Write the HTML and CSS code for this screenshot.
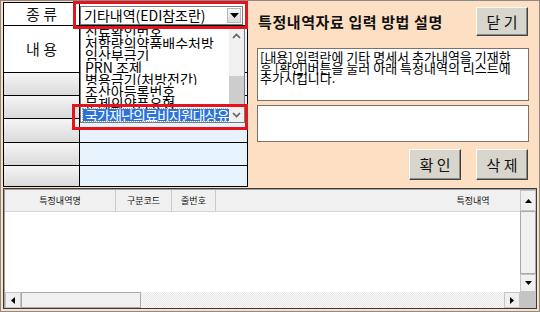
FILE: index.html
```html
<!DOCTYPE html>
<html>
<head>
    <meta charset="utf-8">
    <title>특정내역 입력</title>
    <link rel="stylesheet" href="styles.css">
</head>
<body>
<div class="window">
    <div class="top">
        <div class="form">
            <div class="label plain">종 류</div>
            <div class="value plain">
                <div class="combo">
                    <span class="combo-text">기타내역(EDI참조란)</span>
                    <span class="combo-btn">
                        <svg width="9" height="5" viewBox="0 0 9 5"><polygon points="0,0 9,0 4.5,5" fill="#000"/></svg>
                    </span>
                </div>
            </div>
            <div class="label plain">내 용</div>
            <div class="value"></div>
            <div class="label"></div>
            <div class="value"></div>
            <div class="label"></div>
            <div class="value"></div>
            <div class="label"></div>
            <div class="value"></div>
            <div class="label"></div>
            <div class="value"></div>
            <div class="label"></div>
            <div class="value"></div>
        </div>
        <div class="help">
            <div class="help-head">
                <h2 class="help-title">특정내역자료 입력 방법 설명</h2>
                <button class="btn">닫 기</button>
            </div>
            <div class="memo">[내용] 입력란에 기타 명세서 추가내역을 기재한<br>후 [확인]버튼을 눌러 아래 특정내역의 리스트에<br>추가시킵니다.</div>
            <div class="memo memo-input"></div>
            <div class="actions">
                <button class="btn">확 인</button>
                <button class="btn">삭 제</button>
            </div>
        </div>
    </div>

    <div class="grid">
        <div class="grid-view">
            <div class="grid-head">
                <div class="col col-name">특정내역명</div>
                <div class="col col-code">구분코드</div>
                <div class="col col-line">줄번호</div>
                <div class="col col-text">특정내역</div>
            </div>
            <div class="grid-body"></div>
        </div>
        <div class="vscroll">
            <div class="sb-btn sb-up">
                <svg width="7" height="4" viewBox="0 0 7 4"><polygon points="0,4 7,4 3.5,0" fill="#000"/></svg>
            </div>
            <div class="sb-thumb"></div>
            <div class="sb-btn sb-down">
                <svg width="7" height="4" viewBox="0 0 7 4"><polygon points="0,0 7,0 3.5,4" fill="#000"/></svg>
            </div>
        </div>
        <div class="hscroll">
            <div class="sb-btn sb-side">
                <svg width="4" height="7" viewBox="0 0 4 7"><polygon points="4,0 4,7 0,3.5" fill="#000"/></svg>
            </div>
            <div class="sb-thumb sb-hthumb"></div>
            <div class="sb-track"></div>
            <div class="sb-btn sb-side">
                <svg width="4" height="7" viewBox="0 0 4 7"><polygon points="0,0 0,7 4,3.5" fill="#000"/></svg>
            </div>
        </div>
        <div class="corner"></div>
    </div>

    <!-- opened combo list lies over the form -->
    <div class="droplist">
        <div class="drop-items">
            <div class="drop-item">진료확인번호</div>
            <div class="drop-item">저함량의약품배수처방</div>
            <div class="drop-item">임산부금기</div>
            <div class="drop-item">PRN 조제</div>
            <div class="drop-item">병용금기(처방전간)</div>
            <div class="drop-item">조산아등록번호</div>
            <div class="drop-item">문제의약품유형</div>
            <div class="drop-item selected">국가재난의료비지원대상유</div>
        </div>
        <div class="drop-scroll">
            <svg width="9" height="6" viewBox="0 0 9 6"><polyline points="1,5 4.5,1.5 8,5" fill="none" stroke="#606060" stroke-width="1.6"/></svg>
            <div class="drop-thumb"></div>
            <svg width="9" height="6" viewBox="0 0 9 6"><polyline points="1,1 4.5,4.5 8,1" fill="none" stroke="#606060" stroke-width="1.6"/></svg>
        </div>
    </div>

    <div class="mark mark-combo"></div>
    <div class="mark mark-item"></div>
</div>
</body>
</html>
```

FILE: styles.css
```css
body {
    margin: 0;
    font-family: "Noto Sans CJK KR", "Noto Sans", sans-serif;
    background-color: #fde0c4;
}
.window {
    position: relative;
    width: 540px;
    height: 312px;
    box-sizing: border-box;
    border: 1px solid #8a8a8a;
    background-color: #fde0c4;
    overflow: hidden;
}
.top {
    display: flex;
    height: 187px;
}

/* left form table */
.form {
    margin: 1px 0 0 2px;
    width: 245px;
    height: 185px;
    box-sizing: border-box;
    display: grid;
    grid-template-columns: 75px 167px;
    grid-template-rows: 22px 46px 22px 22px 23px 22px 20px;
    gap: 1px;
    border: 1px solid #000;
    background-color: #000;
}
.label {
    background: linear-gradient(#f5f5f5, #dadada);
    font-size: 15px;
    line-height: 22px;
    text-align: center;
    color: #111;
}
.label.plain {
    background: #fff;
    display: flex;
    align-items: center;
    justify-content: center;
}
.value {
    background-color: #e6f2fc;
}
.value.plain {
    background-color: #fff;
}
.combo {
    display: flex;
    align-items: center;
    margin-top: 3px;
    width: 163px;
    height: 19px;
    box-sizing: border-box;
    border: 1px solid #7a7a7a;
    background: #fff;
}
.combo-text {
    flex: 1;
    padding-left: 3px;
    font-size: 14px;
    line-height: 17px;
    white-space: nowrap;
    overflow: hidden;
}
.combo-btn {
    width: 14px;
    height: 15px;
    margin-right: 1px;
    box-sizing: border-box;
    border: 1px solid #b8b8b8;
    background: linear-gradient(#f4f4f4, #dcdcdc);
    display: flex;
    align-items: center;
    justify-content: center;
}

/* right help panel */
.help {
    flex: 1;
    display: flex;
    flex-direction: column;
    padding: 6px 10px 0 9px;
}
.help-head {
    display: flex;
    align-items: center;
    justify-content: space-between;
    height: 29px;
}
.help-title {
    margin: 0 0 0 1px;
    font-size: 15px;
    font-weight: bold;
    letter-spacing: 0.6px;
    color: #111;
}
.btn {
    width: 52px;
    height: 29px;
    padding: 0;
    font-family: inherit;
    font-size: 15px;
    color: #111;
    background-color: #d8d5cd;
    border: 1px solid;
    border-color: #fcfcfa #404040 #404040 #fcfcfa;
    box-shadow: inset -1px -1px 0 #8c8c8c;
    margin-right: 1px;
}
.memo {
    margin-top: 12px;
    height: 53px;
    box-sizing: border-box;
    border: 1px solid #7d726a;
    background: #fff;
    padding: 3px 2px 0;
    font-size: 13px;
    line-height: 10.5px;
    color: #000;
    white-space: nowrap;
    overflow: hidden;
}
.memo-input {
    margin-top: 4px;
    height: 37px;
}
.actions {
    display: flex;
    justify-content: flex-end;
    gap: 14px;
    margin-top: 7px;
}
.actions .btn {
    height: 31px;
}

/* bottom list grid */
.grid {
    margin: 0 2px;
    height: 121px;
    box-sizing: border-box;
    border: 1px solid #3c3c3c;
    box-shadow: inset 1px 1px 0 #a0a0a0;
    display: grid;
    grid-template-columns: 1fr 16px;
    grid-template-rows: 1fr 16px;
    background: #fff;
    padding: 1px 0 0 1px;
}
.grid-view {
    overflow: hidden;
    background: #fff;
}
.grid-head {
    display: flex;
    width: 760px;
    height: 21px;
    background-color: #f0f0f0;
    border-bottom: 1px solid #d4d4d4;
}
.col {
    flex: none;
    box-sizing: border-box;
    border-right: 1px solid #c8c8c8;
    font-size: 9px;
    line-height: 21px;
    text-align: center;
    color: #111;
}
.col-name { width: 111px; }
.col-code { width: 56px; }
.col-line { width: 44px; }
.col-text { width: 514px; border-right: none; }
.vscroll {
    display: flex;
    flex-direction: column;
    background: #f0f0f0;
}
.sb-btn {
    display: flex;
    align-items: center;
    justify-content: center;
    background: #f0f0f0;
    box-sizing: border-box;
    border: 1px solid #c4c4c4;
}
.sb-up { height: 21px; }
.sb-down { height: 18px; }
.sb-thumb {
    flex: 1;
    background: #f0f0f0;
    border: 1px solid #a8a8a8;
}
.hscroll {
    display: flex;
}
.sb-side { width: 16px; }
.sb-hthumb {
    flex: none;
    width: 118px;
}
.sb-track {
    flex: 1;
    background: repeating-conic-gradient(#e6e6e6 0 25%, #fafafa 0 50%) 0 0 / 2px 2px;
}
.corner {
    background-color: #c4c4c4;
}

/* opened combo list */
.droplist {
    position: absolute;
    left: 79px;
    top: 26px;
    width: 165px;
    height: 96px;
    box-sizing: border-box;
    border: 1px solid #7a7a7a;
    background: #fff;
    display: flex;
    overflow: hidden;
}
.drop-items {
    flex: 1;
    min-width: 0;
    margin-top: -3px;
    padding-left: 2px;
}
.drop-item {
    height: 12px;
    font-size: 14px;
    line-height: 12px;
    padding-left: 2px;
    white-space: nowrap;
    overflow: hidden;
    color: #000;
}
.drop-item.selected {
    background-color: #2b73d8;
    color: #fff;
    letter-spacing: -0.9px;
    outline: 1px dotted #9ab;
}
.drop-scroll {
    width: 15px;
    background: #f0f0f0;
    display: flex;
    flex-direction: column;
    align-items: center;
    padding: 5px 0 4px;
}
.drop-thumb {
    width: 15px;
    height: 28px;
    background: #cdcdcd;
    margin-top: 37px;
    margin-bottom: auto;
}

/* red highlight frames */
.mark {
    position: absolute;
    box-sizing: border-box;
    border: 3px solid #e5131b;
}
.mark-combo {
    left: 72px;
    top: 0;
    width: 175px;
    height: 28px;
}
.mark-item {
    left: 71px;
    top: 103px;
    width: 176px;
    height: 26px;
}
```
